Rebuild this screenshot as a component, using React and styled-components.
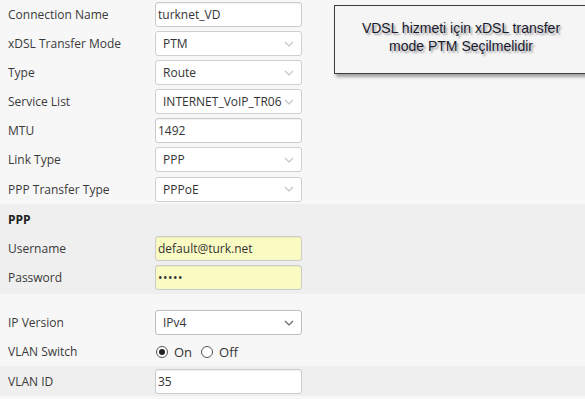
import React from "react"
import styled, { createGlobalStyle } from "styled-components"

const GlobalStyle = createGlobalStyle`
  html, body {
    margin: 0;
    padding: 0;
    background: #f7f7f7;
    overflow: hidden;
  }
  body {
    font-family: "Open Sans", "Noto Sans", sans-serif;
    font-size: 12px;
    color: #333;
  }
`

const Page = styled.div`
  position: relative;
  width: 585px;
  height: 399px;
`

const Section = styled.div`
  background: ${props => (props.dark ? "#efefef" : "#f7f7f7")};
  padding-top: ${props => props.top || 0}px;
  padding-bottom: ${props => props.bottom || 0}px;
`

const Row = styled.div`
  display: grid;
  grid-template-columns: 147px 147px;
  align-items: center;
  height: ${props => props.h || 29}px;
  padding-left: 8px;
`

const Label = styled.div`
  white-space: nowrap;
  font-weight: ${props => (props.bold ? 700 : 400)};
  color: ${props => (props.bold ? "#222" : "#3a3a3a")};
`

const TextInput = styled.div`
  box-sizing: border-box;
  width: 147px;
  height: 25px;
  line-height: 23px;
  border: 1px solid #cbcbcb;
  border-radius: 3px;
  background: ${props => (props.yellow ? "#fafac3" : "#fff")};
  padding: 0 2px;
  color: #333;
  box-shadow: inset 0 1px 1px rgba(0, 0, 0, 0.06);
  white-space: nowrap;
  overflow: hidden;
  letter-spacing: ${props => (props.secret ? "0.5px" : "0")};
`

const SelectBox = styled.div`
  box-sizing: border-box;
  width: 147px;
  height: 25px;
  display: flex;
  align-items: center;
  justify-content: space-between;
  border: 1px solid ${props => (props.active ? "#bdbdbd" : "#cfcfcf")};
  border-radius: 3px;
  background: #fff;
  padding: 0 7px 0 7px;
  color: #333;
  white-space: nowrap;
  overflow: hidden;
`

const SelectValue = styled.span`
  overflow: hidden;
  flex: 1;
`

const Chevron = ({ dark }) => (
  <svg width="10" height="6" viewBox="0 0 10 6" style={{ flexShrink: 0 }}>
    <path
      d="M1 1 L5 5 L9 1"
      fill="none"
      stroke={dark ? "#666" : "#c4c4c4"}
      strokeWidth="1.2"
    />
  </svg>
)

const RadioGroup = styled.div`
  display: flex;
  align-items: center;
  gap: 9px;
  padding-left: 1px;
`

const RadioOption = styled.label`
  display: flex;
  align-items: center;
  gap: 6px;
  font-size: 13px;
  color: #333;
`

const RadioDot = styled.span`
  box-sizing: border-box;
  width: 12px;
  height: 12px;
  border-radius: 50%;
  border: 1px solid #555;
  background: #fff;
  display: flex;
  align-items: center;
  justify-content: center;
  &::after {
    content: "";
    width: 6px;
    height: 6px;
    border-radius: 50%;
    background: ${props => (props.checked ? "#222" : "transparent")};
  }
`

const Note = styled.div`
  position: absolute;
  left: 334px;
  top: 5px;
  width: 254px;
  height: 69px;
  box-sizing: border-box;
  border: 1px solid #3c3c3c;
  background: #f5f5f5;
  box-shadow: 2px 3px 3px rgba(0, 0, 0, 0.35);
  display: flex;
  flex-direction: column;
  justify-content: center;
  padding-bottom: 6px;
  text-align: center;
  font-family: "Liberation Sans", Arial, sans-serif;
  font-size: 14px;
  line-height: 18px;
  color: #1a1a2e;
  text-shadow: 2px 2px 2px rgba(0, 0, 0, 0.35);
`

const Select = ({ value, active }) => (
  <SelectBox active={active}>
    <SelectValue>{value}</SelectValue>
    <Chevron dark={active} />
  </SelectBox>
)

export default function App() {
  return (
    <Page>
      <GlobalStyle />
      <Section>
        <Row>
          <Label>Connection Name</Label>
          <TextInput>turknet_VD</TextInput>
        </Row>
        <Row>
          <Label>xDSL Transfer Mode</Label>
          <Select value="PTM" />
        </Row>
        <Row>
          <Label>Type</Label>
          <Select value="Route" />
        </Row>
        <Row>
          <Label>Service List</Label>
          <Select value="INTERNET_VoIP_TR06" />
        </Row>
        <Row>
          <Label>MTU</Label>
          <TextInput>1492</TextInput>
        </Row>
        <Row>
          <Label>Link Type</Label>
          <Select value="PPP" />
        </Row>
        <Row h={30}>
          <Label>PPP Transfer Type</Label>
          <Select value="PPPoE" />
        </Row>
      </Section>
      <Section dark bottom={2}>
        <Row h={30}>
          <Label bold>PPP</Label>
        </Row>
        <Row>
          <Label>Username</Label>
          <TextInput yellow>default@turk.net</TextInput>
        </Row>
        <Row>
          <Label>Password</Label>
          <TextInput yellow secret>
            •••••
          </TextInput>
        </Row>
      </Section>
      <Section top={14}>
        <Row>
          <Label>IP Version</Label>
          <Select value="IPv4" active />
        </Row>
        <Row>
          <Label>VLAN Switch</Label>
          <RadioGroup>
            <RadioOption>
              <RadioDot checked />
              On
            </RadioOption>
            <RadioOption>
              <RadioDot />
              Off
            </RadioOption>
          </RadioGroup>
        </Row>
      </Section>
      <Section dark>
        <Row h={30}>
          <Label>VLAN ID</Label>
          <TextInput>35</TextInput>
        </Row>
      </Section>
      <Note>
        <div>VDSL hizmeti için xDSL transfer</div>
        <div>mode PTM Seçilmelidir</div>
      </Note>
    </Page>
  )
}
